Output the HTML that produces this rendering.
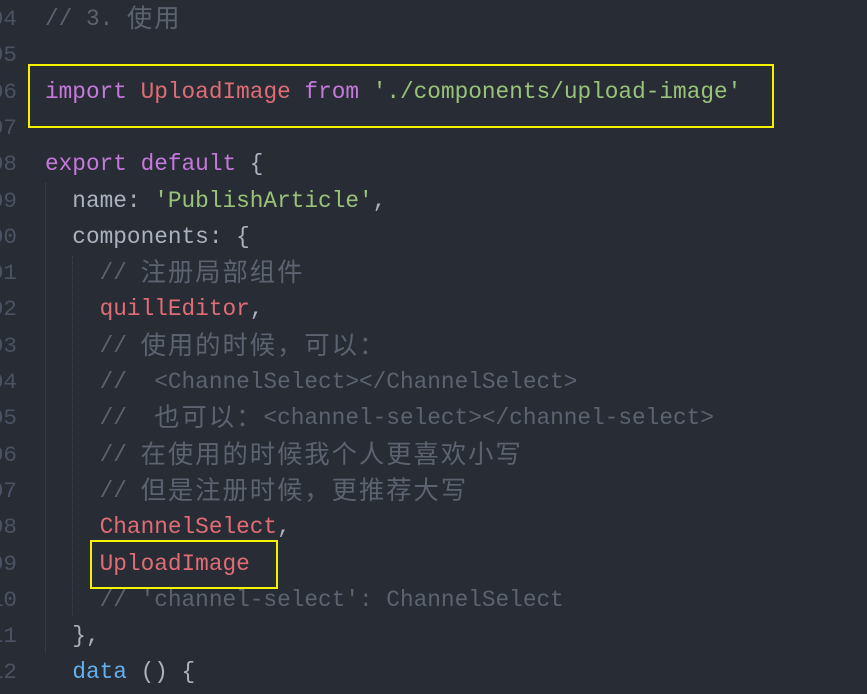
<!DOCTYPE html>
<html><head><meta charset="utf-8"><style>
html,body{margin:0;padding:0;background:#282c34;width:867px;height:694px;overflow:hidden;}
.l{position:absolute;left:45px;height:36.3px;line-height:36.3px;white-space:pre;font-family:"Liberation Mono",monospace;font-size:22.75px;color:#abb2bf;}
.n{position:absolute;right:850px;height:36.3px;line-height:36.3px;white-space:pre;font-family:"Liberation Mono",monospace;font-size:22.6px;color:#4b5263;}
.c{color:#5c6370}.k{color:#c678dd}.r{color:#e06c75}.s{color:#98c379}.b{color:#61afef}
.z{letter-spacing:2px;font-family:"Noto Sans CJK SC",sans-serif;font-size:25.3px;line-height:1px;position:relative;top:2px;}
.box{position:absolute;border:2px solid #f5f200;box-sizing:border-box;}
.g{position:absolute;width:0;border-left:1px dotted #3f4550;}
</style></head><body>
<div class="g" style="left:45px;top:183px;height:470px"></div>
<div class="g" style="left:72px;top:256px;height:360px"></div>
<div class="n" style="top:1px">04</div>
<div class="n" style="top:37.3px">05</div>
<div class="n" style="top:73.6px">06</div>
<div class="n" style="top:109.9px">07</div>
<div class="n" style="top:146.2px">08</div>
<div class="n" style="top:182.5px">09</div>
<div class="n" style="top:218.8px">00</div>
<div class="n" style="top:255.1px">01</div>
<div class="n" style="top:291.4px">02</div>
<div class="n" style="top:327.7px">03</div>
<div class="n" style="top:364px">04</div>
<div class="n" style="top:400.3px">05</div>
<div class="n" style="top:436.6px">06</div>
<div class="n" style="top:472.9px">07</div>
<div class="n" style="top:509.2px">08</div>
<div class="n" style="top:545.5px">09</div>
<div class="n" style="top:581.8px">10</div>
<div class="n" style="top:618.1px">11</div>
<div class="n" style="top:654.4px">12</div>

<div class="l c" style="top:1px">// 3. <span class="z">使用</span></div>
<div class="l" style="top:73.6px"><span class="k">import</span> <span class="r">UploadImage</span> <span class="k">from</span> <span class="s">'./components/upload-image'</span></div>
<div class="l" style="top:146.2px"><span class="k">export</span> <span class="k">default</span> {</div>
<div class="l" style="top:182.5px">  name: <span class="s">'PublishArticle'</span>,</div>
<div class="l" style="top:218.8px">  components: {</div>
<div class="l c" style="top:255.1px">    // <span class="z">注册局部组件</span></div>
<div class="l" style="top:291.4px">    <span class="r">quillEditor</span>,</div>
<div class="l c" style="top:327.7px">    // <span class="z">使用的时候，可以：</span></div>
<div class="l c" style="top:364px">    //  &lt;ChannelSelect&gt;&lt;/ChannelSelect&gt;</div>
<div class="l c" style="top:400.3px">    //  <span class="z">也可以：</span>&lt;channel-select&gt;&lt;/channel-select&gt;</div>
<div class="l c" style="top:436.6px">    // <span class="z">在使用的时候我个人更喜欢小写</span></div>
<div class="l c" style="top:472.9px">    // <span class="z">但是注册时候，更推荐大写</span></div>
<div class="l" style="top:509.2px">    <span class="r">ChannelSelect</span>,</div>
<div class="l" style="top:545.5px">    <span class="r">UploadImage</span></div>
<div class="l c" style="top:581.8px">    // 'channel-select': ChannelSelect</div>
<div class="l" style="top:618.1px">  },</div>
<div class="l" style="top:654.4px">  <span class="b">data</span> () {</div>

<div class="box" style="left:28px;top:64px;width:746px;height:64px"></div>
<div class="box" style="left:90px;top:540px;width:188px;height:49px"></div>
</body></html>
